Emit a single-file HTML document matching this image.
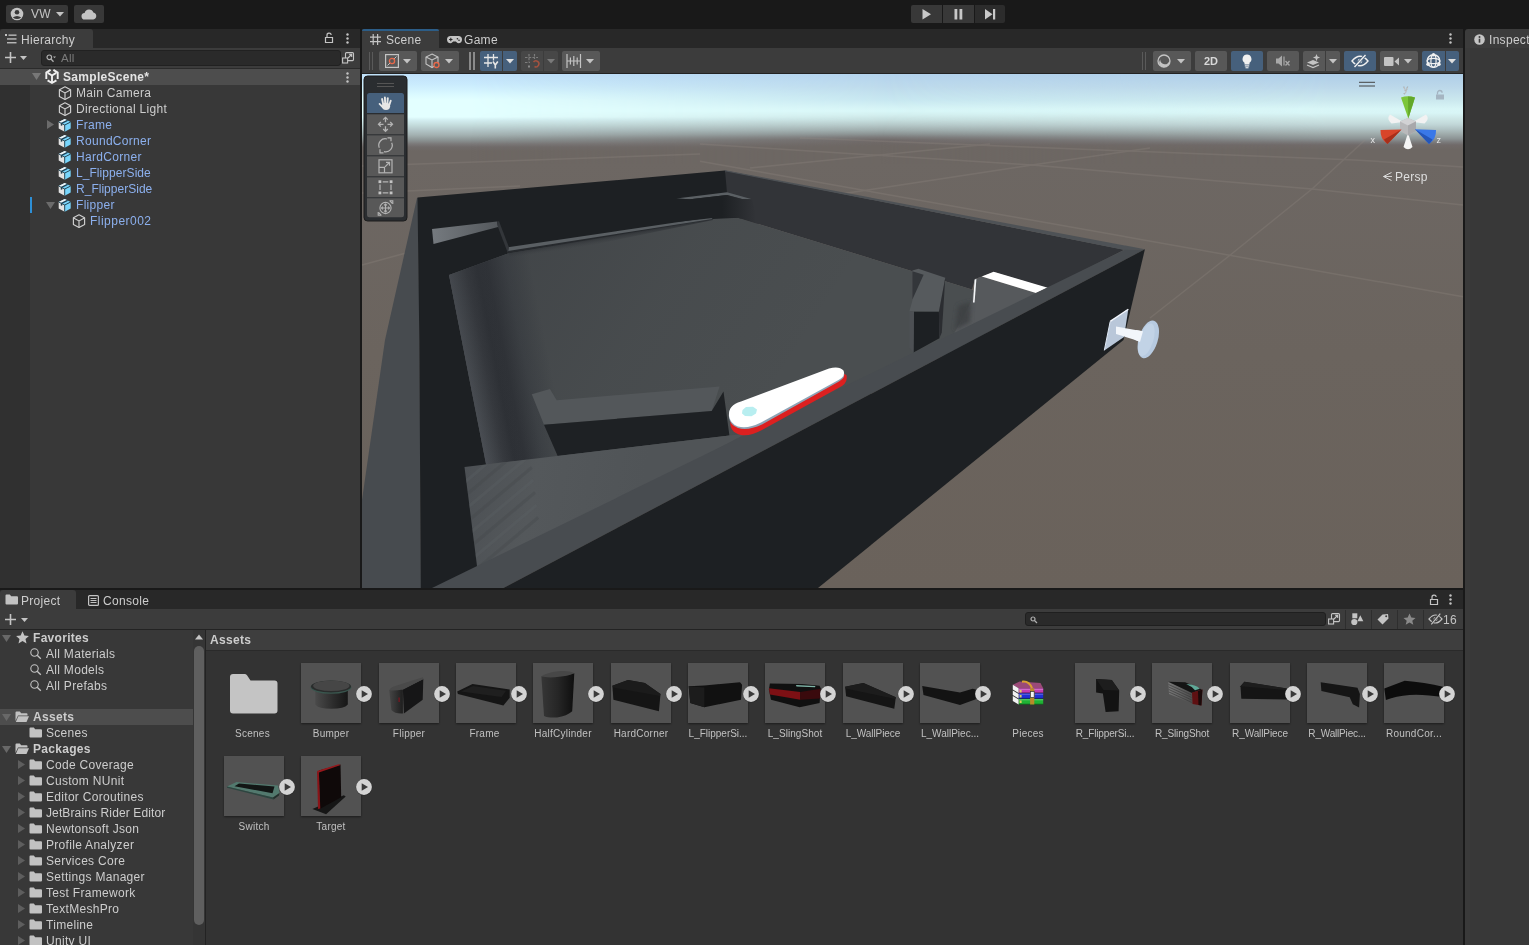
<!DOCTYPE html><html><head><meta charset="utf-8"><title>Unity</title><style>
*{box-sizing:border-box;margin:0;padding:0}
html,body{width:1529px;height:945px;overflow:hidden;background:#191919}
body{position:relative;font-family:"Liberation Sans",sans-serif;font-size:12px;letter-spacing:.3px;color:#cdcdcd;-webkit-font-smoothing:antialiased}
.abs{position:absolute}
.t{position:absolute;white-space:nowrap;line-height:16px;height:16px}
.b{font-weight:700}
.blue{color:#8cb0ee}
.btn{position:absolute;background:#585858;border-radius:2px}
.btn.on{background:#46607c}
.btn.dis{background:#474747}
svg{position:absolute;overflow:visible}
</style></head><body><div id="root" style="position:absolute;left:0;top:0;width:1529px;height:945px;will-change:transform">
<div class="abs" style="left:0px;top:0px;width:1529px;height:29px;background:#191919;"></div>
<div class="abs" style="left:6px;top:5px;width:62px;height:18px;background:#383838;border-radius:2px"></div>
<div class="abs" style="left:74px;top:5px;width:30px;height:18px;background:#383838;border-radius:2px"></div>
<svg style="left:10px;top:7px" width="14" height="14" viewBox="0 0 14 14"><circle cx="7" cy="7" r="6.3" fill="#c4c4c4"/><circle cx="7" cy="5.3" r="2.3" fill="#383838"/><path d="M2.8 10.6 Q7 7.2 11.2 10.6 Q7 13.6 2.8 10.6Z" fill="#383838"/></svg>
<div class="t " style="left:31px;top:6px;color:#c4c4c4">VW</div>
<svg style="left:56px;top:12px" width="8" height="5" viewBox="0 0 8 5"><path d="M0 0H8L4 4.5Z" fill="#c4c4c4"/></svg>
<svg style="left:81px;top:8px" width="16" height="12" viewBox="0 0 16 12"><path d="M4 11.5a3.3 3.3 0 0 1-.4-6.6A4.6 4.6 0 0 1 12.4 4.6 3.5 3.5 0 0 1 12.3 11.5Z" fill="#c4c4c4"/></svg>
<div class="abs" style="left:911px;top:5px;width:31px;height:18px;background:#383838;border-radius:2px 0 0 2px"></div>
<div class="abs" style="left:943px;top:5px;width:31px;height:18px;background:#383838;"></div>
<div class="abs" style="left:975px;top:5px;width:30px;height:18px;background:#2c2c2c;border-radius:0 2px 2px 0"></div>
<svg style="left:922px;top:9px" width="10" height="11" viewBox="0 0 10 11"><path d="M0.5 0L9 5.3L0.5 10.6Z" fill="#c8c8c8"/></svg>
<svg style="left:954px;top:9px" width="9" height="11" viewBox="0 0 9 11"><rect x="0.5" y="0" width="2.8" height="10.5" fill="#c8c8c8"/><rect x="5.5" y="0" width="2.8" height="10.5" fill="#c8c8c8"/></svg>
<svg style="left:985px;top:9px" width="11" height="11" viewBox="0 0 11 11"><path d="M0 0L7.5 5.3L0 10.6Z" fill="#c8c8c8"/><rect x="8" y="0" width="2.2" height="10.5" fill="#c8c8c8"/></svg>
<div class="abs" style="left:0px;top:29px;width:360px;height:19px;background:#282828;"></div>
<div class="abs" style="left:0px;top:29px;width:93px;height:19px;background:#3c3c3c;border-radius:3px 3px 0 0"></div>
<div class="abs" style="left:0px;top:48px;width:360px;height:540px;background:#383838;"></div>
<div class="abs" style="left:0px;top:48px;width:360px;height:20px;background:#3c3c3c;"></div>
<div class="abs" style="left:0px;top:68px;width:360px;height:1px;background:#2b2b2b;"></div>
<div class="abs" style="left:0px;top:69px;width:30px;height:519px;background:#303030;"></div>
<div class="abs" style="left:362px;top:29px;width:1101px;height:19px;background:#282828;"></div>
<div class="abs" style="left:362px;top:29px;width:77px;height:19px;background:#3c3c3c;border-radius:3px 3px 0 0"></div>
<div class="abs" style="left:362px;top:29px;width:77px;height:2px;background:#2c5d87;border-radius:3px 3px 0 0"></div>
<div class="abs" style="left:362px;top:48px;width:1101px;height:26px;background:#3c3c3c;"></div>
<div class="abs" style="left:362px;top:73px;width:1101px;height:1px;background:#232323;"></div>
<div class="abs" style="left:1465px;top:29px;width:64px;height:19px;background:#3c3c3c;border-radius:3px 0 0 0"></div>
<div class="abs" style="left:1465px;top:48px;width:64px;height:897px;background:#383838;"></div>
<div class="abs" style="left:1465px;top:48px;width:5px;height:897px;background:#3a3a3a;"></div>
<div class="abs" style="left:0px;top:588px;width:1463px;height:2px;background:#191919;"></div>
<div class="abs" style="left:0px;top:590px;width:1463px;height:19px;background:#282828;"></div>
<div class="abs" style="left:0px;top:590px;width:76px;height:19px;background:#3c3c3c;border-radius:3px 3px 0 0"></div>
<div class="abs" style="left:0px;top:609px;width:1463px;height:20px;background:#3c3c3c;"></div>
<div class="abs" style="left:0px;top:629px;width:1463px;height:1px;background:#232323;"></div>
<div class="abs" style="left:0px;top:630px;width:205px;height:315px;background:#383838;"></div>
<div class="abs" style="left:205px;top:630px;width:1px;height:315px;background:#232323;"></div>
<div class="abs" style="left:206px;top:630px;width:1257px;height:20px;background:#3e3e3e;"></div>
<div class="abs" style="left:206px;top:650px;width:1257px;height:1px;background:#2a2a2a;"></div>
<div class="abs" style="left:206px;top:651px;width:1257px;height:294px;background:#333333;"></div>
<svg style="left:5px;top:33px" width="12" height="12" viewBox="0 0 12 12"><g fill="#c4c4c4"><rect x="0" y="1" width="2" height="2"/><rect x="0" y="2" width="1" height="1" fill="none"/><rect x="3.5" y="1.5" width="8" height="1.3"/><rect x="2" y="5.3" width="9.5" height="1.3"/><rect x="2" y="9.1" width="9.5" height="1.3"/></g></svg>
<div class="t " style="left:21px;top:32px;">Hierarchy</div>
<svg style="left:324px;top:32px" width="10" height="12" viewBox="0 0 10 12"><path d="M1.5 5.5h7v5h-7z" fill="none" stroke="#c4c4c4" stroke-width="1.2"/><path d="M3 5.5V3.4a2.1 2.1 0 0 1 4.2-.4" fill="none" stroke="#c4c4c4" stroke-width="1.2"/></svg>
<svg style="left:345.5px;top:33px" width="3" height="11" viewBox="0 0 3 11"><circle cx="1.5" cy="1.5" r="1.2" fill="#c4c4c4"/><circle cx="1.5" cy="5.5" r="1.2" fill="#c4c4c4"/><circle cx="1.5" cy="9.5" r="1.2" fill="#c4c4c4"/></svg>
<svg style="left:5px;top:52px" width="11" height="11" viewBox="0 0 11 11"><path d="M5.5 0v11M0 5.5h11" stroke="#c4c4c4" stroke-width="1.6" fill="none"/></svg>
<svg style="left:20px;top:56px" width="8" height="5" viewBox="0 0 8 5"><path d="M0 0H7L3.5 4Z" fill="#c4c4c4"/></svg>
<div class="abs" style="left:41px;top:50px;width:300px;height:16px;background:#2a2a2a;border:1px solid #212121;border-radius:3px"></div>
<svg style="left:46px;top:54px" width="10" height="9" viewBox="0 0 10 9"><circle cx="3.3" cy="3.3" r="2.3" fill="none" stroke="#b0b0b0" stroke-width="1.2"/><path d="M5 5l2.5 2.8" stroke="#b0b0b0" stroke-width="1.3"/><path d="M7 2.5h3l-1.5 1.8z" fill="#b0b0b0"/></svg>
<div class="t " style="left:61px;top:50px;color:#7a7a7a;font-size:11.5px">All</div>
<svg style="left:342px;top:52px" width="12" height="12" viewBox="0 0 12 12"><rect x="3.5" y="0.6" width="8" height="8" rx="1" fill="none" stroke="#c4c4c4" stroke-width="1.1"/><rect x="0.6" y="6" width="5" height="5" fill="#3c3c3c" stroke="#c4c4c4" stroke-width="1.1"/><path d="M6 6l3.5-3.5M7 2.3h2.7V5" stroke="#c4c4c4" stroke-width="1.1" fill="none"/></svg>
<div class="abs" style="left:0px;top:69px;width:360px;height:16px;background:#4d4d4d;"></div>
<svg style="left:345.5px;top:71.5px" width="3" height="11" viewBox="0 0 3 11"><circle cx="1.5" cy="1.5" r="1.2" fill="#c4c4c4"/><circle cx="1.5" cy="5.5" r="1.2" fill="#c4c4c4"/><circle cx="1.5" cy="9.5" r="1.2" fill="#c4c4c4"/></svg>
<svg style="left:32px;top:73px" width="9" height="7" viewBox="0 0 9 7"><path d="M0 0H9L4.5 7Z" fill="#777"/></svg>
<svg style="left:45px;top:69px" width="14" height="15" viewBox="0 0 14 15"><g stroke="#f0f0f0" stroke-width="1.9" fill="none" stroke-linejoin="miter" stroke-linecap="butt"><path d="M7 6.500V13M7 6.500L2.800 3.900M7 6.500L11.200 3.900"/><path d="M5.600 .9L1.300 3.600V10"/><path d="M8.400 .9L12.700 3.600V10"/><path d="M2.600 11.400L7 14L11.400 11.400"/></g></svg>
<div class="t b" style="left:63px;top:68.5px;color:#e4e4e4">SampleScene*</div>
<svg style="left:58px;top:85.5px" width="14" height="14" viewBox="0 0 14 14"><path d="M7 0.8L12.6 3.8v6.6L7 13.4L1.4 10.4V3.8Z" fill="none" stroke="#d0d0d0" stroke-width="1.15" stroke-linejoin="round"/><path d="M1.6 4L7 6.9L12.4 4M7 6.9V13.2" fill="none" stroke="#d0d0d0" stroke-width="1.15"/></svg>
<div class="t " style="left:76px;top:84.5px;">Main Camera</div>
<svg style="left:58px;top:101.5px" width="14" height="14" viewBox="0 0 14 14"><path d="M7 0.8L12.6 3.8v6.6L7 13.4L1.4 10.4V3.8Z" fill="none" stroke="#d0d0d0" stroke-width="1.15" stroke-linejoin="round"/><path d="M1.6 4L7 6.9L12.4 4M7 6.9V13.2" fill="none" stroke="#d0d0d0" stroke-width="1.15"/></svg>
<div class="t " style="left:76px;top:100.5px;">Directional Light</div>
<svg style="left:58px;top:117.5px" width="14" height="14" viewBox="0 0 14 14"><path d="M0.700 4L6.700 7v6.700L0.700 10.600Z" fill="#e2e2e2"/><path d="M6.700 7L12.700 4v6.600L6.700 13.700Z" fill="#78d5fb"/><path d="M0.700 4L6.700 1L12.700 4L6.700 7Z" fill="#78d5fb"/><path d="M0.700 4L6.700 1L8.800 2L2.800 5.050Z" fill="#f4f4f4"/><path d="M2.800 5.050L8.800 2L10.300 2.800L4.300 5.800Z" fill="#1f3f52"/><path d="M0.700 4L6.700 7L12.700 4M6.700 7v6.700" stroke="#21404f" stroke-width=".9" fill="none"/><path d="M2.800 5.100v2.600l1.500-.3V5.900z" fill="#21404f"/></svg>
<div class="t blue" style="left:76px;top:116.5px;">Frame</div>
<svg style="left:47px;top:120.0px" width="7" height="9" viewBox="0 0 7 9"><path d="M0 0L7 4.5L0 9Z" fill="#6b6b6b"/></svg>
<svg style="left:58px;top:133.5px" width="14" height="14" viewBox="0 0 14 14"><path d="M0.700 4L6.700 7v6.700L0.700 10.600Z" fill="#e2e2e2"/><path d="M6.700 7L12.700 4v6.600L6.700 13.700Z" fill="#78d5fb"/><path d="M0.700 4L6.700 1L12.700 4L6.700 7Z" fill="#78d5fb"/><path d="M0.700 4L6.700 1L8.800 2L2.800 5.050Z" fill="#f4f4f4"/><path d="M2.800 5.050L8.800 2L10.300 2.800L4.300 5.800Z" fill="#1f3f52"/><path d="M0.700 4L6.700 7L12.700 4M6.700 7v6.700" stroke="#21404f" stroke-width=".9" fill="none"/><path d="M2.800 5.100v2.600l1.500-.3V5.900z" fill="#21404f"/></svg>
<div class="t blue" style="left:76px;top:132.5px;">RoundCorner</div>
<svg style="left:58px;top:149.5px" width="14" height="14" viewBox="0 0 14 14"><path d="M0.700 4L6.700 7v6.700L0.700 10.600Z" fill="#e2e2e2"/><path d="M6.700 7L12.700 4v6.600L6.700 13.700Z" fill="#78d5fb"/><path d="M0.700 4L6.700 1L12.700 4L6.700 7Z" fill="#78d5fb"/><path d="M0.700 4L6.700 1L8.800 2L2.800 5.050Z" fill="#f4f4f4"/><path d="M2.800 5.050L8.800 2L10.300 2.800L4.300 5.800Z" fill="#1f3f52"/><path d="M0.700 4L6.700 7L12.700 4M6.700 7v6.700" stroke="#21404f" stroke-width=".9" fill="none"/><path d="M2.800 5.100v2.600l1.500-.3V5.900z" fill="#21404f"/></svg>
<div class="t blue" style="left:76px;top:148.5px;">HardCorner</div>
<svg style="left:58px;top:165.5px" width="14" height="14" viewBox="0 0 14 14"><path d="M0.700 4L6.700 7v6.700L0.700 10.600Z" fill="#e2e2e2"/><path d="M6.700 7L12.700 4v6.600L6.700 13.700Z" fill="#78d5fb"/><path d="M0.700 4L6.700 1L12.700 4L6.700 7Z" fill="#78d5fb"/><path d="M0.700 4L6.700 1L8.800 2L2.800 5.050Z" fill="#f4f4f4"/><path d="M2.800 5.050L8.800 2L10.300 2.800L4.300 5.800Z" fill="#1f3f52"/><path d="M0.700 4L6.700 7L12.700 4M6.700 7v6.700" stroke="#21404f" stroke-width=".9" fill="none"/><path d="M2.800 5.100v2.600l1.500-.3V5.900z" fill="#21404f"/></svg>
<div class="t blue" style="left:76px;top:164.5px;letter-spacing:0.06px">L_FlipperSide</div>
<svg style="left:58px;top:181.5px" width="14" height="14" viewBox="0 0 14 14"><path d="M0.700 4L6.700 7v6.700L0.700 10.600Z" fill="#e2e2e2"/><path d="M6.700 7L12.700 4v6.600L6.700 13.700Z" fill="#78d5fb"/><path d="M0.700 4L6.700 1L12.700 4L6.700 7Z" fill="#78d5fb"/><path d="M0.700 4L6.700 1L8.800 2L2.800 5.050Z" fill="#f4f4f4"/><path d="M2.800 5.050L8.800 2L10.300 2.800L4.300 5.800Z" fill="#1f3f52"/><path d="M0.700 4L6.700 7L12.700 4M6.700 7v6.700" stroke="#21404f" stroke-width=".9" fill="none"/><path d="M2.800 5.100v2.600l1.500-.3V5.900z" fill="#21404f"/></svg>
<div class="t blue" style="left:76px;top:180.5px;letter-spacing:0.02px">R_FlipperSide</div>
<svg style="left:58px;top:197.5px" width="14" height="14" viewBox="0 0 14 14"><path d="M0.700 4L6.700 7v6.700L0.700 10.600Z" fill="#e2e2e2"/><path d="M6.700 7L12.700 4v6.600L6.700 13.700Z" fill="#78d5fb"/><path d="M0.700 4L6.700 1L12.700 4L6.700 7Z" fill="#78d5fb"/><path d="M0.700 4L6.700 1L8.800 2L2.800 5.050Z" fill="#f4f4f4"/><path d="M2.800 5.050L8.800 2L10.300 2.800L4.300 5.800Z" fill="#1f3f52"/><path d="M0.700 4L6.700 7L12.700 4M6.700 7v6.700" stroke="#21404f" stroke-width=".9" fill="none"/><path d="M2.800 5.100v2.600l1.500-.3V5.900z" fill="#21404f"/></svg>
<div class="t blue" style="left:76px;top:196.5px;">Flipper</div>
<svg style="left:46px;top:201.5px" width="9" height="7" viewBox="0 0 9 7"><path d="M0 0H9L4.5 7Z" fill="#6b6b6b"/></svg>
<svg style="left:72px;top:213.5px" width="14" height="14" viewBox="0 0 14 14"><path d="M7 0.8L12.6 3.8v6.6L7 13.4L1.4 10.4V3.8Z" fill="none" stroke="#d0d0d0" stroke-width="1.15" stroke-linejoin="round"/><path d="M1.6 4L7 6.9L12.4 4M7 6.9V13.2" fill="none" stroke="#d0d0d0" stroke-width="1.15"/></svg>
<div class="t blue" style="left:90px;top:212.5px;letter-spacing:0.48px">Flipper002</div>
<div class="abs" style="left:30px;top:197px;width:2px;height:16px;background:#2d8fd6;"></div>
<svg style="left:370px;top:34px" width="11" height="11" viewBox="0 0 11 11"><path d="M3.2 0v11M7.6 0v11M0 3.2h11M0 7.6h11" stroke="#c4c4c4" stroke-width="1.2"/></svg>
<div class="t " style="left:386px;top:32px;">Scene</div>
<svg style="left:447px;top:35px" width="15" height="10" viewBox="0 0 15 10"><path d="M3.6 1h7.8a3.6 3.6 0 0 1 0 7.2c-1.2 0-1.8-.9-2.6-1.6H6.200c-.8.7-1.400 1.6-2.600 1.600a3.600 3.600 0 0 1 0-7.200z" fill="#c4c4c4"/><path d="M3.800 2.800v3.400M2.100 4.500h3.400" stroke="#282828" stroke-width="1.100"/><circle cx="10.400" cy="3.700" r=".8" fill="#282828"/><circle cx="12" cy="5.300" r=".8" fill="#282828"/></svg>
<div class="t " style="left:464px;top:32px;">Game</div>
<svg style="left:1448.5px;top:33px" width="3" height="11" viewBox="0 0 3 11"><circle cx="1.5" cy="1.5" r="1.2" fill="#c4c4c4"/><circle cx="1.5" cy="5.5" r="1.2" fill="#c4c4c4"/><circle cx="1.5" cy="9.5" r="1.2" fill="#c4c4c4"/></svg>
<svg style="left:1473.5px;top:33.5px" width="11" height="11" viewBox="0 0 11 11"><circle cx="5.5" cy="5.5" r="5.3" fill="#c4c4c4"/><rect x="4.700" y="4.700" width="1.600" height="4" fill="#3c3c3c"/><circle cx="5.500" cy="2.900" r="1" fill="#3c3c3c"/></svg>
<div class="t " style="left:1489px;top:32px;">Inspector</div>
<div class="abs" style="left:369px;top:52px;width:1px;height:18px;background:#5a5a5a;"></div>
<div class="abs" style="left:372px;top:52px;width:1px;height:18px;background:#5a5a5a;"></div>
<div class="btn " style="left:379px;top:51px;width:38px;height:20px"></div>
<div class="btn " style="left:421px;top:51px;width:38px;height:20px"></div>
<svg style="left:385px;top:54px" width="14" height="14" viewBox="0 0 14 14"><rect x=".6" y=".6" width="12.800" height="12.800" fill="none" stroke="#c4c4c4" stroke-width="1.200"/><path d="M2.500 11.500L11.500 2.500" stroke="#c4c4c4" stroke-width="1"/><circle cx="7" cy="7" r="2.600" fill="#585858" stroke="#e8684a" stroke-width="1.300"/></svg>
<svg style="left:403px;top:59px" width="8" height="5" viewBox="0 0 8 5"><path d="M0 0H8L4 4.5Z" fill="#c4c4c4"/></svg>
<svg style="left:425px;top:53px" width="16" height="16" viewBox="0 0 16 16"><path d="M7 1L13 4v7L7 14.500L1 11V4Z" fill="none" stroke="#c4c4c4" stroke-width="1.100"/><path d="M1 4l6 3 6-3M7 7v7.500" stroke="#c4c4c4" stroke-width="1.100" fill="none"/><circle cx="11.500" cy="12" r="2.500" fill="#585858" stroke="#e8684a" stroke-width="1.300"/></svg>
<svg style="left:445px;top:59px" width="8" height="5" viewBox="0 0 8 5"><path d="M0 0H8L4 4.5Z" fill="#c4c4c4"/></svg>
<div class="abs" style="left:469px;top:52px;width:1.5px;height:18px;background:#8a8a8a;"></div>
<div class="abs" style="left:473px;top:52px;width:1.5px;height:18px;background:#8a8a8a;"></div>
<div class="btn on" style="left:480px;top:51px;width:37px;height:20px"></div>
<div class="abs" style="left:502px;top:51px;width:1px;height:20px;background:#3c3c3c;"></div>
<svg style="left:484px;top:54px" width="16" height="15" viewBox="0 0 16 15"><path d="M4 0v13M9.500 0v6.500M0 3.500h14M0 9h8" stroke="#e6e6e6" stroke-width="1.300" fill="none"/><path d="M9 7.500l2.300 3.500v3.500M13.800 7.500l-2.500 3.500" stroke="#e6e6e6" stroke-width="1.600" fill="none"/></svg>
<svg style="left:506px;top:59px" width="8" height="5" viewBox="0 0 8 5"><path d="M0 0H8L4 4.5Z" fill="#e0e0e0"/></svg>
<div class="btn dis" style="left:521px;top:51px;width:37px;height:20px"></div>
<div class="abs" style="left:543px;top:51px;width:1px;height:20px;background:#3c3c3c;"></div>
<svg style="left:525px;top:54px" width="16" height="15" viewBox="0 0 16 15"><path d="M4 0v8M9.500 0v5M0 3.500h13M0 8.500h5" stroke="#7c7c7c" stroke-width="1.200" fill="none" stroke-dasharray="2.500 1.200"/><path d="M8.500 8a3 3 0 1 1 1 4.500" stroke="#a4523f" stroke-width="1.500" fill="none"/><rect x="3" y="11.500" width="2" height="2" fill="#8a8a8a"/></svg>
<svg style="left:547px;top:59px" width="8" height="5" viewBox="0 0 8 5"><path d="M0 0H8L4 4.5Z" fill="#7a7a7a"/></svg>
<div class="btn " style="left:562px;top:51px;width:38px;height:20px"></div>
<svg style="left:566px;top:54px" width="16" height="14" viewBox="0 0 16 14"><path d="M1 0v14M14.500 0v14M1 7h13.500M4.400 3.500v7M7.800 2v10M11.200 3.500v7" stroke="#c4c4c4" stroke-width="1.200" fill="none"/></svg>
<svg style="left:586px;top:59px" width="8" height="5" viewBox="0 0 8 5"><path d="M0 0H8L4 4.5Z" fill="#c4c4c4"/></svg>
<div class="abs" style="left:1142px;top:52px;width:1px;height:18px;background:#5a5a5a;"></div>
<div class="abs" style="left:1145px;top:52px;width:1px;height:18px;background:#5a5a5a;"></div>
<div class="btn " style="left:1153px;top:51px;width:38px;height:20px"></div>
<svg style="left:1157px;top:54px" width="14" height="14" viewBox="0 0 14 14"><circle cx="7" cy="7" r="6" fill="none" stroke="#c4c4c4" stroke-width="1.300"/><path d="M2.500 10.500A5.500 5.500 0 0 0 12.400 6 4.500 4.500 0 0 1 3.200 5.500 5.500 5.500 0 0 0 2.500 10.500z" fill="#c4c4c4"/></svg>
<svg style="left:1177px;top:59px" width="8" height="5" viewBox="0 0 8 5"><path d="M0 0H8L4 4.5Z" fill="#c4c4c4"/></svg>
<div class="btn " style="left:1195px;top:51px;width:32px;height:20px"></div>
<div class="t b" style="left:1204px;top:53px;color:#d8d8d8;font-size:11px;letter-spacing:0">2D</div>
<div class="btn on" style="left:1231px;top:51px;width:32px;height:20px"></div>
<svg style="left:1241px;top:54px" width="12" height="15" viewBox="0 0 12 15"><path d="M6 .5a4.500 4.500 0 0 1 2.500 8.200V10.500h-5V8.700A4.500 4.500 0 0 1 6 .5z" fill="#f0f0f0"/><rect x="3.800" y="11.300" width="4.400" height="1.200" fill="#f0f0f0"/><rect x="4.500" y="13.200" width="3" height="1.100" fill="#f0f0f0"/></svg>
<div class="btn " style="left:1267px;top:51px;width:32px;height:20px"></div>
<svg style="left:1276px;top:55px" width="15" height="12" viewBox="0 0 15 12"><path d="M0 3.500h2.500L6 .5v11L2.500 8.500H0z" fill="#a8a8a8"/><path d="M8 1.500v9" stroke="#a8a8a8" stroke-width="1.200"/><path d="M9.500 6l4 4.500M13.500 6l-4 4.500" stroke="#a8a8a8" stroke-width="1.300"/></svg>
<div class="btn " style="left:1303px;top:51px;width:37px;height:20px"></div>
<div class="abs" style="left:1325px;top:51px;width:1px;height:20px;background:#3c3c3c;"></div>
<svg style="left:1306px;top:54px" width="16" height="15" viewBox="0 0 16 15"><path d="M1 8.500l6-2.500 6 2.500-6 2.500z" fill="#c4c4c4"/><path d="M1 11l6 2.500 6-2.500" stroke="#c4c4c4" stroke-width="1.200" fill="none"/><path d="M10.500 0l1 2.600 2.600 1-2.600 1-1 2.600-1-2.600-2.600-1 2.600-1z" fill="#c4c4c4"/></svg>
<svg style="left:1329px;top:59px" width="8" height="5" viewBox="0 0 8 5"><path d="M0 0H8L4 4.5Z" fill="#c4c4c4"/></svg>
<div class="btn on" style="left:1344px;top:51px;width:32px;height:20px"></div>
<svg style="left:1351px;top:54px" width="18" height="14" viewBox="0 0 18 14"><path d="M1 7q8-9.500 16 0q-8 9.500-16 0z" fill="none" stroke="#f0f0f0" stroke-width="1.400"/><circle cx="9" cy="7" r="2.300" fill="#f0f0f0"/><path d="M3 13.500L15 .5" stroke="#46607c" stroke-width="3"/><path d="M3.500 13L14.500 1" stroke="#f0f0f0" stroke-width="1.400"/></svg>
<div class="btn " style="left:1380px;top:51px;width:38px;height:20px"></div>
<svg style="left:1384px;top:56px" width="16" height="11" viewBox="0 0 16 11"><rect x="0" y="1" width="9.500" height="9" rx="1" fill="#c4c4c4"/><path d="M10.500 5.500L15 1.500v8z" fill="#c4c4c4"/></svg>
<svg style="left:1404px;top:59px" width="8" height="5" viewBox="0 0 8 5"><path d="M0 0H8L4 4.5Z" fill="#c4c4c4"/></svg>
<div class="btn on" style="left:1422px;top:51px;width:37px;height:20px"></div>
<div class="abs" style="left:1445px;top:51px;width:1px;height:20px;background:#3c3c3c;"></div>
<svg style="left:1425px;top:53px" width="17" height="16" viewBox="0 0 17 16"><circle cx="8.500" cy="8" r="6.300" fill="none" stroke="#f0f0f0" stroke-width="1.500"/><ellipse cx="8.500" cy="8" rx="6.300" ry="2.600" fill="none" stroke="#f0f0f0" stroke-width="1.200"/><ellipse cx="8.500" cy="8" rx="2.600" ry="6.300" fill="none" stroke="#f0f0f0" stroke-width="1.200"/><circle cx="8.500" cy="1.700" r="1.700" fill="#f0f0f0"/><circle cx="3" cy="11.300" r="1.700" fill="#f0f0f0"/><circle cx="14" cy="11.300" r="1.700" fill="#f0f0f0"/></svg>
<svg style="left:1448px;top:59px" width="8" height="5" viewBox="0 0 8 5"><path d="M0 0H8L4 4.5Z" fill="#e0e0e0"/></svg>
<svg style="left:362px;top:74px;overflow:hidden" width="1101" height="514" viewBox="362 74 1101 514">
<defs>
<linearGradient id="skyL" x1="0" y1="74" x2="0" y2="164" gradientUnits="userSpaceOnUse">
<stop offset="0.0000" stop-color="#c0e1fa"/><stop offset="0.1222" stop-color="#cbecfd"/><stop offset="0.2333" stop-color="#dbfaff"/><stop offset="0.2889" stop-color="#e3ffff"/><stop offset="0.4778" stop-color="#e3ffff"/><stop offset="0.5111" stop-color="#d4eff2"/><stop offset="0.5667" stop-color="#c4dcdc"/><stop offset="0.6222" stop-color="#b3c6c8"/><stop offset="0.6778" stop-color="#a3b1b1"/><stop offset="0.7333" stop-color="#8c9494"/><stop offset="0.7778" stop-color="#7b7979"/><stop offset="0.8111" stop-color="#706b6a"/><stop offset="0.8556" stop-color="#6d6763"/><stop offset="1.0000" stop-color="#6d6763"/>
</linearGradient>
<linearGradient id="skyC" x1="0" y1="74" x2="0" y2="164" gradientUnits="userSpaceOnUse">
<stop offset="0.0000" stop-color="#b4d3ed"/><stop offset="0.1444" stop-color="#bedbec"/><stop offset="0.2889" stop-color="#c8e8f1"/><stop offset="0.3778" stop-color="#d6f4f6"/><stop offset="0.4111" stop-color="#d9f7f8"/><stop offset="0.4556" stop-color="#d3efef"/><stop offset="0.5111" stop-color="#c6dfdf"/><stop offset="0.5667" stop-color="#b5c8c8"/><stop offset="0.6222" stop-color="#a0aeae"/><stop offset="0.6667" stop-color="#8c9494"/><stop offset="0.7000" stop-color="#7c7b7b"/><stop offset="0.7333" stop-color="#706a69"/><stop offset="0.8000" stop-color="#6d6763"/><stop offset="1.0000" stop-color="#6d6763"/>
</linearGradient>
<linearGradient id="skyR" x1="0" y1="74" x2="0" y2="164" gradientUnits="userSpaceOnUse">
<stop offset="0.0000" stop-color="#afcee8"/><stop offset="0.1444" stop-color="#bcd8ea"/><stop offset="0.2889" stop-color="#cbe8ee"/><stop offset="0.3889" stop-color="#d9f6f7"/><stop offset="0.4333" stop-color="#d8f5f6"/><stop offset="0.4889" stop-color="#cfe8e8"/><stop offset="0.5556" stop-color="#c2d8d9"/><stop offset="0.6111" stop-color="#b1c3c4"/><stop offset="0.6667" stop-color="#9fabab"/><stop offset="0.7222" stop-color="#8b9293"/><stop offset="0.7556" stop-color="#7b7b7c"/><stop offset="0.7889" stop-color="#706a69"/><stop offset="0.8444" stop-color="#6d6763"/><stop offset="1.0000" stop-color="#6d6763"/>
</linearGradient>
<linearGradient id="gnd" x1="0" y1="160" x2="0" y2="588" gradientUnits="userSpaceOnUse"><stop offset="0" stop-color="#6d6763"/><stop offset="0.45" stop-color="#6b645e"/><stop offset="1" stop-color="#6a625b"/></linearGradient>
<linearGradient id="hC" x1="470" y1="0" x2="880" y2="0" gradientUnits="userSpaceOnUse"><stop offset="0" stop-color="#000"/><stop offset="1" stop-color="#fff"/></linearGradient>
<linearGradient id="hR" x1="880" y1="0" x2="1330" y2="0" gradientUnits="userSpaceOnUse"><stop offset="0" stop-color="#000"/><stop offset="1" stop-color="#fff"/></linearGradient>
<mask id="mC" maskUnits="userSpaceOnUse" x="362" y="74" width="1101" height="92"><rect x="362" y="74" width="1101" height="92" fill="url(#hC)"/></mask>
<mask id="mR" maskUnits="userSpaceOnUse" x="362" y="74" width="1101" height="92"><rect x="362" y="74" width="1101" height="92" fill="url(#hR)"/></mask>
<linearGradient id="fl" x1="449" y1="275" x2="529.500" y2="259.200" gradientUnits="userSpaceOnUse">
<stop offset="0" stop-color="#50545a"/>
<stop offset="0.08" stop-color="#474b50"/>
<stop offset="0.22" stop-color="#373a3f"/>
<stop offset="0.35" stop-color="#2d3035"/>
<stop offset="0.48" stop-color="#2f3237"/>
<stop offset="0.7" stop-color="#3e4246"/>
<stop offset="1" stop-color="#4a4e50"/>
</linearGradient>
<linearGradient id="fsh" x1="480" y1="240" x2="760" y2="420" gradientUnits="userSpaceOnUse">
<stop offset="0" stop-color="#303338" stop-opacity=".36"/><stop offset=".55" stop-color="#303338" stop-opacity=".1"/><stop offset="1" stop-color="#303338" stop-opacity="0"/>
</linearGradient>
<linearGradient id="lsh" x1="610" y1="234" x2="611.300" y2="242.500" gradientUnits="userSpaceOnUse">
<stop offset="0" stop-color="#25282c" stop-opacity=".95"/><stop offset="1" stop-color="#3a3d41" stop-opacity="0"/>
</linearGradient>
<linearGradient id="rw" x1="722" y1="0" x2="756" y2="0" gradientUnits="userSpaceOnUse">
<stop offset="0" stop-color="#1d2023"/><stop offset="1" stop-color="#323438"/>
</linearGradient>
<linearGradient id="rc" x1="432" y1="0" x2="498" y2="0" gradientUnits="userSpaceOnUse">
<stop offset="0" stop-color="#757a7f"/><stop offset="1" stop-color="#54585c"/>
</linearGradient>
<linearGradient id="ramp" x1="464" y1="467" x2="640" y2="500" gradientUnits="userSpaceOnUse">
<stop offset="0" stop-color="#4c5054"/><stop offset="0.4" stop-color="#54585b"/><stop offset="1" stop-color="#505457"/>
</linearGradient>
<clipPath id="rcp"><polygon points="464.500,467 729.400,435.500 745,434 600,512 478,570 477,566"/></clipPath>
<filter id="bl" x="-50%" y="-50%" width="200%" height="200%"><feGaussianBlur stdDeviation="2.200"/></filter>
</defs>
<rect x="362" y="160" width="1101" height="428" fill="url(#gnd)"/>
<rect x="362" y="74" width="1101" height="90" fill="url(#skyL)"/>
<rect x="362" y="74" width="1101" height="90" fill="url(#skyC)" mask="url(#mC)"/>
<rect x="362" y="74" width="1101" height="90" fill="url(#skyR)" mask="url(#mR)"/>
<g stroke="#948b84" stroke-width="1.500" opacity=".27" fill="none"><path d="M362 265L417 250"/><path d="M362 193L520 186"/><path d="M362 166L700 154"/><path d="M700 161.200L1463 296.700"/><path d="M700 144L1032 165L1312 189L1463 205"/><path d="M800 138L1355 160L1463 167"/><path d="M1365 140L1312 189L1229 256L1150 318"/><path d="M1150 148L1032 165L871 189.400L800 200"/><path d="M990 144L750 168"/></g>
<polygon points="417,198 385,340 362,500 362,588 421,588 419.500,340 418,198" fill="#474b4f"/>
<polygon points="417.500,197.500 725,170.600 742,222 508,258 452,280 489,464 466,470 479,566 435,588 420.800,588 419.300,340" fill="#1d2023"/>
<polygon points="725,170.600 1124.500,249.700 1048,288.500 994,272 975,279 972,289.400 738,217.700 727,193" fill="#323438"/>
<polygon points="725,170.200 1144.900,249.200 1124.500,249.900 1000,225.100 725,171.200" fill="#4e5256"/>
<polygon points="449,275 508,253.500 713,219 738,217.700 972,289.400 985,300 1000,320 500,588 486,464" fill="#4a4e50"/>
<polygon points="449,275 508,253.500 548,247 592,454 486,464" fill="url(#fl)"/>
<polygon points="449,275 508,253.500 713,219 738,217.700 972,289.400 985,300 1000,320 500,588 486,464" fill="url(#fsh)"/>
<polygon points="508,250 712,218.500 713,220 510,262" fill="url(#lsh)"/>
<polygon points="508,247.300 711,217.200 712.500,219 508,251" fill="#5a5f63"/>
<polygon points="432,229 497,221.600 498,227 433.500,244" fill="url(#rc)"/>
<polygon points="497,221.600 499,221.200 509,247.500 508,253.500 498,227" fill="#33363a"/>
<polygon points="676,198.400 727,192.300 752,199.200 742,199 727,195 690,199.200" fill="#5b6064"/>
<polygon points="676,198.400 690,199.200 727,195 742,199 752,199.200 758,224 738,217.700 713,218 676,222" fill="url(#rw)"/>
<polygon points="975,279 982,276.500 1036,293 1047.800,287.700 1060,290 940,360 972,300" fill="#56595c"/>
<polygon points="958,306 971,302 970,322 955,330" fill="#3c3f43" filter="url(#bl)" opacity=".85"/>
<polygon points="912.400,270.600 918.300,268.800 945.300,277.700 938.900,311.800 909.400,311.200 912.400,300.600" fill="#565a5d"/>
<polygon points="912.400,271.200 923.600,274.700 912.400,299.400" fill="#33363a"/>
<polygon points="914,311.800 938.900,311.800 939.400,338.300 913.500,352.400" fill="#1d2023"/>
<polygon points="945.300,277.700 938.900,311.800 939.400,338.300 941.800,332.400" fill="#2b2d31"/>
<polygon points="909.400,311.200 914,311.800 913.500,352.400 909.400,347.700" fill="#4d5054"/>
<polygon points="981.800,276.500 993.600,271.800 1047.800,287.700 1036,293" fill="#ffffff"/>
<polygon points="974.600,279.400 976.400,279 974.600,302.400 973,302.400" fill="#f4f6f8"/>
<polygon points="531.800,394.300 549.900,389 556.700,400.200 719.600,386.500 711.700,411 544,424.700" fill="#53575a"/>
<polygon points="544,424.700 711.700,411 723.500,391.400 729.400,435.500 557.700,456" fill="#1e2124"/>
<polygon points="464.500,467 729.400,435.500 745,434 600,512 478,570 477,566" fill="url(#ramp)"/>
<g stroke-width="3" fill="none" opacity=".33" clip-path="url(#rcp)"><path d="M465.0,482.0L527.0,430.0" stroke="#5d6165"/><path d="M466.6,494.5L528.6,442.5" stroke="#44484b"/><path d="M468.2,507.0L530.2,455.0" stroke="#5d6165"/><path d="M469.8,519.5L531.8,467.5" stroke="#44484b"/><path d="M471.4,532.0L533.4,480.0" stroke="#5d6165"/><path d="M473.0,544.5L535.0,492.5" stroke="#44484b"/><path d="M474.6,557.0L536.6,505.0" stroke="#5d6165"/><path d="M476.2,569.5L538.2,517.5" stroke="#44484b"/></g>
<polygon points="1144.900,249.200 1124.500,249.700 432,588 503.500,588" fill="#484c50"/>
<polygon points="1144.900,249.200 1123.500,340 818,588 503.500,588" fill="#1d2023"/>
<path d="M730.500,421 Q729,432 741,435 Q750,436.500 762,430 L842,386 Q848,382 846.500,375 L840,372 L740,405 Z" fill="#dc2020"/>
<path d="M729,417.500 Q727.500,406 741,402.500 L829,369.500 Q839,366.500 843.500,371.500 Q846.500,377 839,381.500 L762,424.500 Q748,431 738,428 Q730,425 729,417.500 Z" fill="#8ea4b6"/>
<path d="M729,416 Q728,405 741,401.500 L829,368.500 Q839,365.500 843.500,370.500 Q846,376 838.500,380 L761,422.500 Q748,429 738,426.500 Q730,423.500 729,416 Z" fill="#ffffff"/>
<polygon points="742.500,410 746,407 753,406.800 757,409.500 756,413.500 751.500,416.300 745,416 742,413.500" fill="#b8eef0"/>
<polygon points="1110.200,321.400 1128.300,309.200 1124,337.100 1104.300,350.400" fill="#b9c7d9"/>
<path d="M1110.200,321.400 L1128.300,309.200" stroke="#f4f8ff" stroke-width="1.300"/>
<path d="M1110.200,321.400 L1104.300,350.400" stroke="#dfe8f4" stroke-width="1"/>
<polygon points="1116,326.500 1141,331 1138.500,341 1116,334" fill="#f2f6fb"/>
<ellipse cx="1148.300" cy="339.300" rx="9.500" ry="19.500" transform="rotate(17 1148.300 339.300)" fill="#b7cae0"/>
<ellipse cx="1146.300" cy="339.800" rx="7" ry="17" transform="rotate(17 1146.300 339.800)" fill="#c9d8ea" opacity=".6"/>
<polygon points="1136,330 1143,331.300 1140,342 1134.500,339.700" fill="#f2f6fb"/>
<rect x="364" y="76" width="43" height="145" rx="3.500" fill="#2a2d30" stroke="#1c1c1c" stroke-width="1"/>
<path d="M377,83.500h17M377,86.500h17" stroke="#555" stroke-width="1"/>
<path d="M367,113V95.5a2.500,2.500 0 0 1 2.500,-2.500h32a2.500,2.500 0 0 1 2.500,2.500V113z" fill="#46607c"/>
<rect x="367" y="114.3" width="37" height="20" fill="#585858"/>
<rect x="367" y="135.3" width="37" height="20" fill="#585858"/>
<rect x="367" y="156.3" width="37" height="20" fill="#585858"/>
<rect x="367" y="177.3" width="37" height="20" fill="#585858"/>
<path d="M367,198.3h37V214.8a2.500,2.500 0 0 1 -2.500,2.500h-32a2.500,2.500 0 0 1 -2.500,-2.500z" fill="#585858"/>
<g transform="translate(385.500,103.300)"><ellipse cx=".5" cy="3" rx="4.100" ry="3.600" fill="#e6e6e6"/><g stroke="#e6e6e6" stroke-width="1.900" stroke-linecap="round" fill="none"><path d="M-2.300,1L-3.400,-4.300"/><path d="M-.3,.5L-.6,-5.800"/><path d="M1.800,.8L2.300,-5"/><path d="M3.700,2L5.200,-2.600"/><path d="M-2.800,3.800L-5.900,.6"/></g></g>
<g transform="translate(385.500,124.300)" stroke="#b4b4b4" stroke-width="1.300" fill="none"><path d="M0,-6.500V-2M0,6.500V2M-6.500,0H-2M6.500,0H2"/><path d="M-2.300,-4.700L0,-7L2.300,-4.700M-2.300,4.700L0,7L2.300,4.700M-4.700,-2.300L-7,0L-4.700,2.300M4.700,-2.300L7,0L4.700,2.300"/></g>
<g transform="translate(385.500,145.300)" stroke="#b4b4b4" stroke-width="1.200" fill="none"><path d="M-6.200,2.500A6.500,6.500 0 0 1 1.500,-6.300"/><path d="M6.200,-2.500A6.500,6.500 0 0 1 -1.500,6.300"/><path d="M2,-7.500L5.500,-7.500L5.500,-4M-2,7.500L-5.500,7.500L-5.500,4" /></g>
<g transform="translate(385.500,166.300)" stroke="#b4b4b4" stroke-width="1.200" fill="none"><rect x="-6.500" y="-6.500" width="13" height="13"/><path d="M-6.500,1H-1V6.500"/><path d="M-.5,.5L3.800,-3.800M.5,-4H4V-.5"/></g>
<g transform="translate(385.500,187.300)" stroke="#b4b4b4" stroke-width="1.200" fill="none"><path d="M-5.500,-2.800V2.800M5.500,-2.800V2.800M-2.800,-5.500H2.800M-2.800,5.500H2.800"/><g fill="#c4c4c4" stroke="none"><rect x="-7" y="-7" width="2.800" height="2.800"/><rect x="4.200" y="-7" width="2.800" height="2.800"/><rect x="-7" y="4.200" width="2.800" height="2.800"/><rect x="4.200" y="4.200" width="2.800" height="2.800"/></g></g>
<g transform="translate(385.500,208)" stroke="#b4b4b4" stroke-width="1.100" fill="none"><circle r="5.600"/><path d="M0,-3.800V3.800M-3.800,0H3.800"/><path d="M-1.400,-2.600L0,-4L1.400,-2.600M-1.400,2.600L0,4L1.400,2.600M-2.600,-1.400L-4,0L-2.600,1.400M2.600,-1.400L4,0L2.600,1.400" /><path d="M4,-7.300L7.300,-7.300L7.300,-4M-4,7.300L-7.300,7.300L-7.300,4" /><path d="M4.500,-7L7,-4.500z M-4.500,7L-7,4.500z" fill="#b4b4b4"/></g>
<path d="M1359,82.300h16M1359,86h16" stroke="#444" stroke-width="1"/>
<path d="M1403,122 L1390,114.500 Q1386,119 1391.500,123.500 Z" fill="#f2f2f2"/>
<path d="M1413,122 L1426,114.500 Q1430,119 1424.500,123.500 Z" fill="#f2f2f2"/>
<path d="M1408,133 L1403.500,147 Q1408,151.500 1412.500,147 Z" fill="#f4f4f4"/>
<polygon points="1408,118 1416,121.500 1416,131 1408,135.500 1400,131 1400,121.500" fill="#b9b9bb"/>
<polygon points="1408,118 1416,121.500 1408,125.500 1400,121.500" fill="#d2d2d4"/>
<polygon points="1408,125.500 1416,121.500 1416,131 1408,135.500" fill="#a8a8ab"/>
<path d="M1401,97.500 Q1408,95 1415,97.500 L1408.300,118.500 Z" fill="#7cc63a"/><path d="M1408,96.500 Q1412,96.500 1415,97.500 L1408.300,118.500 Z" fill="#63a82a"/>
<path d="M1401.500,129.500 L1380.500,130 Q1380,139 1387.500,144 Z" fill="#d8452a"/><path d="M1401.500,129.500 L1384,139.500 Q1385.500,142.500 1387.500,144 Z" fill="#a82f1a"/>
<path d="M1415,129.300 L1436,130 Q1436.500,139 1429,144 Z" fill="#3a78e8"/><path d="M1415,129.300 L1432.500,139.500 Q1431,142.500 1429,144 Z" fill="#2556b8"/>
<text x="1403.500" y="91.500" font-size="9" font-family="Liberation Sans,sans-serif" fill="#f0f0f0" stroke="#888" stroke-width=".3">y</text>
<text x="1370.500" y="143" font-size="9" font-family="Liberation Sans,sans-serif" fill="#e8e8e8">x</text>
<text x="1436.500" y="143" font-size="9" font-family="Liberation Sans,sans-serif" fill="#e8e8e8">z</text>
<g transform="translate(1436,90)" opacity=".75"><rect x="0" y="4.500" width="8" height="5" fill="#9aa6b4"/><path d="M1.500,4.500V2.800a2.300,2.300 0 0 1 4.600,0" fill="none" stroke="#9aa6b4" stroke-width="1.300"/></g>
<path d="M1391.500,172.500L1383.500,176.500L1391.500,180.500" stroke="#dcdcdc" stroke-width="1" fill="none"/><path d="M1383.500,176.500H1392" stroke="#dcdcdc" stroke-width=".9"/>
<text x="1395" y="181" font-size="12" letter-spacing=".3" font-family="Liberation Sans,sans-serif" fill="#dedede">Persp</text>
</svg>
<svg style="left:5px;top:594px" width="13" height="11" viewBox="0 0 13 11"><path d="M0.500 1.500a1 1 0 0 1 1-1h3.300l1.400 1.700h5.800a1 1 0 0 1 1 1v6.300a1 1 0 0 1-1 1h-10.500a1 1 0 0 1-1-1z" fill="#c2c2c2"/></svg>
<div class="t " style="left:21px;top:593px;">Project</div>
<svg style="left:88px;top:594.5px" width="11" height="11" viewBox="0 0 11 11"><rect x=".6" y=".6" width="9.800" height="9.800" rx="1" fill="none" stroke="#c4c4c4" stroke-width="1.200"/><path d="M2.500 3.500h6M2.500 5.500h6M2.500 7.500h6" stroke="#c4c4c4" stroke-width="1"/></svg>
<div class="t " style="left:103px;top:593px;">Console</div>
<svg style="left:1428.5px;top:593.5px" width="10" height="12" viewBox="0 0 10 12"><path d="M1.500 5.500h7v5h-7z" fill="none" stroke="#c4c4c4" stroke-width="1.200"/><path d="M3 5.500V3.400a2.100 2.100 0 0 1 4.200-.4" fill="none" stroke="#c4c4c4" stroke-width="1.200"/></svg>
<svg style="left:1448.5px;top:594px" width="3" height="11" viewBox="0 0 3 11"><circle cx="1.500" cy="1.500" r="1.200" fill="#c4c4c4"/><circle cx="1.500" cy="5.500" r="1.200" fill="#c4c4c4"/><circle cx="1.500" cy="9.500" r="1.200" fill="#c4c4c4"/></svg>
<svg style="left:5px;top:613.5px" width="11" height="11" viewBox="0 0 11 11"><path d="M5.500 0v11M0 5.500h11" stroke="#c4c4c4" stroke-width="1.600" fill="none"/></svg>
<svg style="left:21px;top:617.5px" width="8" height="5" viewBox="0 0 8 5"><path d="M0 0H7L3.500 4Z" fill="#c4c4c4"/></svg>
<div class="abs" style="left:1025px;top:612px;width:301px;height:14px;background:#2a2a2a;border:1px solid #1f1f1f;border-radius:3px"></div>
<svg style="left:1030px;top:616px" width="8" height="8" viewBox="0 0 8 8"><circle cx="3" cy="3" r="2" fill="none" stroke="#b0b0b0" stroke-width="1.200"/><path d="M4.500 4.500l2.500 2.500" stroke="#b0b0b0" stroke-width="1.300"/></svg>
<svg style="left:1328px;top:613px" width="12" height="12" viewBox="0 0 12 12"><rect x="3.500" y=".6" width="8" height="8" rx="1" fill="none" stroke="#c4c4c4" stroke-width="1.100"/><rect x=".6" y="6" width="5" height="5" fill="#3c3c3c" stroke="#c4c4c4" stroke-width="1.100"/><path d="M6 6l3.500-3.500M7 2.300h2.700V5" stroke="#c4c4c4" stroke-width="1.100" fill="none"/></svg>
<div class="abs" style="left:1345px;top:610px;width:1px;height:19px;background:#2e2e2e;"></div>
<div class="abs" style="left:1371px;top:610px;width:1px;height:19px;background:#2e2e2e;"></div>
<div class="abs" style="left:1397px;top:610px;width:1px;height:19px;background:#2e2e2e;"></div>
<div class="abs" style="left:1423px;top:610px;width:1px;height:19px;background:#2e2e2e;"></div>
<svg style="left:1351px;top:613px" width="13" height="12" viewBox="0 0 13 12"><rect x="1.300" y=".3" width="5" height="5" fill="#c4c4c4"/><circle cx="3.300" cy="9" r="3.100" fill="#c4c4c4"/><path d="M6.300 8.300l3-6 3 6z" fill="#c4c4c4"/></svg>
<svg style="left:1377px;top:613px" width="13" height="12" viewBox="0 0 13 12"><path d="M5.500 1.500l5.500-.5.500 4.500-6 6-5-5z" fill="#c4c4c4"/><circle cx="9.200" cy="3.300" r="1" fill="#3c3c3c"/></svg>
<svg style="left:1403px;top:613px" width="13" height="12" viewBox="0 0 13 12"><path d="M6.500 .5l1.800 4 4.200.4-3.200 2.800 1 4.100-3.800-2.300-3.800 2.300 1-4.100L.5 4.900l4.200-.4z" fill="#8a8a8a"/></svg>
<svg style="left:1428px;top:613px" width="16" height="12" viewBox="0 0 16 12"><path d="M1 6q6.500-8 13 0q-6.500 8-13 0z" fill="none" stroke="#c4c4c4" stroke-width="1.200"/><circle cx="7.500" cy="6" r="2" fill="#c4c4c4"/><path d="M3 11.500L12 .5" stroke="#3c3c3c" stroke-width="2.600"/><path d="M3.300 11.300L12.300 .7" stroke="#c4c4c4" stroke-width="1.200"/></svg>
<div class="t " style="left:1443px;top:611.5px;color:#c4c4c4">16</div>
<svg style="left:2px;top:634.6px" width="9" height="7" viewBox="0 0 9 7"><path d="M0 0H9L4.500 7Z" fill="#686868"/></svg>
<svg style="left:15.5px;top:631.1px" width="13" height="13" viewBox="0 0 13 13"><path d="M6.500 .3l1.900 4.200 4.500.5-3.400 3 1 4.500-4-2.400-4 2.400 1-4.500L.1 5l4.500-.5z" fill="#c4c4c4"/></svg>
<div class="t b" style="left:33px;top:629.6px;">Favorites</div>
<svg style="left:30px;top:647.6px" width="12" height="12" viewBox="0 0 12 12"><circle cx="4.500" cy="4.500" r="3.700" fill="none" stroke="#c4c4c4" stroke-width="1.100"/><path d="M7.200 7.200l3.600 3.600" stroke="#c4c4c4" stroke-width="1.300"/></svg>
<div class="t " style="left:46px;top:645.6px;">All Materials</div>
<svg style="left:30px;top:663.6px" width="12" height="12" viewBox="0 0 12 12"><circle cx="4.500" cy="4.500" r="3.700" fill="none" stroke="#c4c4c4" stroke-width="1.100"/><path d="M7.200 7.200l3.600 3.600" stroke="#c4c4c4" stroke-width="1.300"/></svg>
<div class="t " style="left:46px;top:661.6px;">All Models</div>
<svg style="left:30px;top:679.6px" width="12" height="12" viewBox="0 0 12 12"><circle cx="4.500" cy="4.500" r="3.700" fill="none" stroke="#c4c4c4" stroke-width="1.100"/><path d="M7.200 7.200l3.600 3.600" stroke="#c4c4c4" stroke-width="1.300"/></svg>
<div class="t " style="left:46px;top:677.6px;">All Prefabs</div>
<div class="abs" style="left:0px;top:709px;width:193px;height:16px;background:#4d4d4d;"></div>
<svg style="left:2px;top:713.8000000000001px" width="9" height="7" viewBox="0 0 9 7"><path d="M0 0H9L4.500 7Z" fill="#686868"/></svg>
<svg style="left:15px;top:711.3000000000001px" width="15" height="12" viewBox="0 0 15 12"><path d="M0.500 1.500a1 1 0 0 1 1-1h3.300l1.400 1.700h5.300a1 1 0 0 1 1 1v1.300h-9.500l-2.500 5.500z" fill="#c2c2c2"/><path d="M3.300 5.300h10.700l-2.500 5.700h-10.700z" fill="#c2c2c2"/></svg>
<div class="t b" style="left:33px;top:708.8000000000001px;">Assets</div>
<svg style="left:29px;top:727.3000000000001px" width="13" height="11" viewBox="0 0 13 11"><path d="M0.500 1.500a1 1 0 0 1 1-1h3.300l1.400 1.700h5.800a1 1 0 0 1 1 1v6.300a1 1 0 0 1-1 1h-10.500a1 1 0 0 1-1-1z" fill="#c2c2c2"/></svg>
<div class="t " style="left:46px;top:724.8000000000001px;">Scenes</div>
<svg style="left:2px;top:745.8000000000001px" width="9" height="7" viewBox="0 0 9 7"><path d="M0 0H9L4.500 7Z" fill="#686868"/></svg>
<svg style="left:15px;top:743.3000000000001px" width="15" height="12" viewBox="0 0 15 12"><path d="M0.500 1.500a1 1 0 0 1 1-1h3.300l1.400 1.700h5.300a1 1 0 0 1 1 1v1.300h-9.500l-2.500 5.500z" fill="#c2c2c2"/><path d="M3.300 5.300h10.700l-2.500 5.700h-10.700z" fill="#c2c2c2"/></svg>
<div class="t b" style="left:33px;top:740.8000000000001px;">Packages</div>
<svg style="left:18px;top:760.3000000000001px" width="7" height="9" viewBox="0 0 7 9"><path d="M0 0L7 4.500L0 9Z" fill="#5e5e5e"/></svg>
<svg style="left:29px;top:759.3000000000001px" width="13" height="11" viewBox="0 0 13 11"><path d="M0.500 1.500a1 1 0 0 1 1-1h3.300l1.400 1.700h5.800a1 1 0 0 1 1 1v6.300a1 1 0 0 1-1 1h-10.500a1 1 0 0 1-1-1z" fill="#c2c2c2"/></svg>
<div class="t " style="left:46px;top:756.8000000000001px;">Code Coverage</div>
<svg style="left:18px;top:776.3000000000001px" width="7" height="9" viewBox="0 0 7 9"><path d="M0 0L7 4.500L0 9Z" fill="#5e5e5e"/></svg>
<svg style="left:29px;top:775.3000000000001px" width="13" height="11" viewBox="0 0 13 11"><path d="M0.500 1.500a1 1 0 0 1 1-1h3.300l1.400 1.700h5.800a1 1 0 0 1 1 1v6.300a1 1 0 0 1-1 1h-10.500a1 1 0 0 1-1-1z" fill="#c2c2c2"/></svg>
<div class="t " style="left:46px;top:772.8000000000001px;">Custom NUnit</div>
<svg style="left:18px;top:792.3000000000001px" width="7" height="9" viewBox="0 0 7 9"><path d="M0 0L7 4.500L0 9Z" fill="#5e5e5e"/></svg>
<svg style="left:29px;top:791.3000000000001px" width="13" height="11" viewBox="0 0 13 11"><path d="M0.500 1.500a1 1 0 0 1 1-1h3.300l1.400 1.700h5.800a1 1 0 0 1 1 1v6.300a1 1 0 0 1-1 1h-10.500a1 1 0 0 1-1-1z" fill="#c2c2c2"/></svg>
<div class="t " style="left:46px;top:788.8000000000001px;">Editor Coroutines</div>
<svg style="left:18px;top:808.3000000000001px" width="7" height="9" viewBox="0 0 7 9"><path d="M0 0L7 4.500L0 9Z" fill="#5e5e5e"/></svg>
<svg style="left:29px;top:807.3000000000001px" width="13" height="11" viewBox="0 0 13 11"><path d="M0.500 1.500a1 1 0 0 1 1-1h3.300l1.400 1.700h5.800a1 1 0 0 1 1 1v6.300a1 1 0 0 1-1 1h-10.500a1 1 0 0 1-1-1z" fill="#c2c2c2"/></svg>
<div class="t " style="left:46px;top:804.8000000000001px;letter-spacing:.12px">JetBrains Rider Editor</div>
<svg style="left:18px;top:824.3000000000001px" width="7" height="9" viewBox="0 0 7 9"><path d="M0 0L7 4.500L0 9Z" fill="#5e5e5e"/></svg>
<svg style="left:29px;top:823.3000000000001px" width="13" height="11" viewBox="0 0 13 11"><path d="M0.500 1.500a1 1 0 0 1 1-1h3.300l1.400 1.700h5.800a1 1 0 0 1 1 1v6.300a1 1 0 0 1-1 1h-10.500a1 1 0 0 1-1-1z" fill="#c2c2c2"/></svg>
<div class="t " style="left:46px;top:820.8000000000001px;">Newtonsoft Json</div>
<svg style="left:18px;top:840.3000000000001px" width="7" height="9" viewBox="0 0 7 9"><path d="M0 0L7 4.500L0 9Z" fill="#5e5e5e"/></svg>
<svg style="left:29px;top:839.3000000000001px" width="13" height="11" viewBox="0 0 13 11"><path d="M0.500 1.500a1 1 0 0 1 1-1h3.300l1.400 1.700h5.800a1 1 0 0 1 1 1v6.300a1 1 0 0 1-1 1h-10.500a1 1 0 0 1-1-1z" fill="#c2c2c2"/></svg>
<div class="t " style="left:46px;top:836.8000000000001px;">Profile Analyzer</div>
<svg style="left:18px;top:856.3000000000001px" width="7" height="9" viewBox="0 0 7 9"><path d="M0 0L7 4.500L0 9Z" fill="#5e5e5e"/></svg>
<svg style="left:29px;top:855.3000000000001px" width="13" height="11" viewBox="0 0 13 11"><path d="M0.500 1.500a1 1 0 0 1 1-1h3.300l1.400 1.700h5.800a1 1 0 0 1 1 1v6.300a1 1 0 0 1-1 1h-10.500a1 1 0 0 1-1-1z" fill="#c2c2c2"/></svg>
<div class="t " style="left:46px;top:852.8000000000001px;">Services Core</div>
<svg style="left:18px;top:872.3000000000001px" width="7" height="9" viewBox="0 0 7 9"><path d="M0 0L7 4.500L0 9Z" fill="#5e5e5e"/></svg>
<svg style="left:29px;top:871.3000000000001px" width="13" height="11" viewBox="0 0 13 11"><path d="M0.500 1.500a1 1 0 0 1 1-1h3.300l1.400 1.700h5.800a1 1 0 0 1 1 1v6.300a1 1 0 0 1-1 1h-10.500a1 1 0 0 1-1-1z" fill="#c2c2c2"/></svg>
<div class="t " style="left:46px;top:868.8000000000001px;">Settings Manager</div>
<svg style="left:18px;top:888.3000000000001px" width="7" height="9" viewBox="0 0 7 9"><path d="M0 0L7 4.500L0 9Z" fill="#5e5e5e"/></svg>
<svg style="left:29px;top:887.3000000000001px" width="13" height="11" viewBox="0 0 13 11"><path d="M0.500 1.500a1 1 0 0 1 1-1h3.300l1.400 1.700h5.800a1 1 0 0 1 1 1v6.300a1 1 0 0 1-1 1h-10.500a1 1 0 0 1-1-1z" fill="#c2c2c2"/></svg>
<div class="t " style="left:46px;top:884.8000000000001px;">Test Framework</div>
<svg style="left:18px;top:904.3000000000001px" width="7" height="9" viewBox="0 0 7 9"><path d="M0 0L7 4.500L0 9Z" fill="#5e5e5e"/></svg>
<svg style="left:29px;top:903.3000000000001px" width="13" height="11" viewBox="0 0 13 11"><path d="M0.500 1.500a1 1 0 0 1 1-1h3.300l1.400 1.700h5.800a1 1 0 0 1 1 1v6.300a1 1 0 0 1-1 1h-10.500a1 1 0 0 1-1-1z" fill="#c2c2c2"/></svg>
<div class="t " style="left:46px;top:900.8000000000001px;">TextMeshPro</div>
<svg style="left:18px;top:920.3000000000001px" width="7" height="9" viewBox="0 0 7 9"><path d="M0 0L7 4.500L0 9Z" fill="#5e5e5e"/></svg>
<svg style="left:29px;top:919.3000000000001px" width="13" height="11" viewBox="0 0 13 11"><path d="M0.500 1.500a1 1 0 0 1 1-1h3.300l1.400 1.700h5.800a1 1 0 0 1 1 1v6.300a1 1 0 0 1-1 1h-10.500a1 1 0 0 1-1-1z" fill="#c2c2c2"/></svg>
<div class="t " style="left:46px;top:916.8000000000001px;">Timeline</div>
<svg style="left:18px;top:936.3000000000001px" width="7" height="9" viewBox="0 0 7 9"><path d="M0 0L7 4.500L0 9Z" fill="#5e5e5e"/></svg>
<svg style="left:29px;top:935.3000000000001px" width="13" height="11" viewBox="0 0 13 11"><path d="M0.500 1.500a1 1 0 0 1 1-1h3.300l1.400 1.700h5.800a1 1 0 0 1 1 1v6.300a1 1 0 0 1-1 1h-10.500a1 1 0 0 1-1-1z" fill="#c2c2c2"/></svg>
<div class="t " style="left:46px;top:932.8000000000001px;">Unity UI</div>
<div class="abs" style="left:193px;top:630px;width:12px;height:315px;background:#353535;"></div>
<svg style="left:195px;top:634px" width="8" height="6" viewBox="0 0 8 6"><path d="M0 5.500L4 0.500L8 5.500Z" fill="#c4c4c4"/></svg>
<div class="abs" style="left:194px;top:646px;width:10px;height:279px;background:#5f5f5f;border-radius:5px"></div>
<div class="t b" style="left:210px;top:631.5px;">Assets</div>
<svg width="0" height="0" style="left:0;top:0"><defs><linearGradient id="gb" x1="0" y1="0" x2="1" y2="0"><stop offset="0" stop-color="#4a4a4a"/><stop offset=".55" stop-color="#2c2c2c"/><stop offset="1" stop-color="#161616"/></linearGradient><linearGradient id="gh" x1="0" y1="0" x2="1" y2="0"><stop offset="0" stop-color="#363636"/><stop offset=".5" stop-color="#262626"/><stop offset="1" stop-color="#0e0e0e"/></linearGradient><linearGradient id="gf" x1="0" y1="0" x2="1" y2="0"><stop offset="0" stop-color="#454545"/><stop offset="1" stop-color="#1e1e1e"/></linearGradient><linearGradient id="gs" x1="0" y1="0" x2="1" y2="0"><stop offset="0" stop-color="#787878"/><stop offset="1" stop-color="#4c4c4c"/></linearGradient></defs></svg>
<svg style="left:224px;top:663px" width="60" height="60" viewBox="0 0 60 60"><path d="M6 14a3 3 0 0 1 3-3h11.500a3 3 0 0 1 2.500 1.300l3.500 5.200h24a3 3 0 0 1 3 3v27a3 3 0 0 1-3 3h-41.500a3 3 0 0 1-3-3z" fill="#c4c4c4"/></svg>
<div class="t" style="left:207.5px;width:90px;text-align:center;top:725.5px;font-size:10px;letter-spacing:0.25px;color:#c0c0c0">Scenes</div>
<div class="abs" style="left:301px;top:663px;width:60px;height:60px;background:#525252;box-shadow:0 1px 2px rgba(0,0,0,.45)"></div>
<svg style="left:301px;top:663px" width="60" height="60" viewBox="0 0 60 60"><path d="M14.300 27v14.500q3 4.300 16 4.300t16.500-4.300v-14.500z" fill="url(#gb)"/><ellipse cx="30" cy="24.300" rx="20.400" ry="6.500" fill="#39564e"/><ellipse cx="30" cy="23.400" rx="20" ry="6" fill="#2a2c2c"/><ellipse cx="30.300" cy="22.800" rx="18.200" ry="5.200" fill="#464646"/></svg>
<svg style="left:355.5px;top:685.5px" width="16" height="16" viewBox="0 0 16 16"><circle cx="8" cy="8.300" r="8.300" fill="#000" opacity=".25"/><circle cx="8" cy="8" r="7.900" fill="#d4d4d4"/><path d="M5.700 4.300L12 8L5.700 11.700Z" fill="#3a3a3a"/></svg>
<div class="t" style="left:286px;width:90px;text-align:center;top:725.5px;font-size:10px;letter-spacing:0.25px;color:#c0c0c0">Bumper</div>
<div class="abs" style="left:379px;top:663px;width:60px;height:60px;background:#525252;box-shadow:0 1px 2px rgba(0,0,0,.45)"></div>
<svg style="left:379px;top:663px" width="60" height="60" viewBox="0 0 60 60"><path d="M10.300 27.500q1-2.500 4-3l9.600 2v24q-8 .5-11.500-3.500z" fill="url(#gf)"/><path d="M23.900 26.400L44.300 15.900L43.700 36.800L24.900 50.400z" fill="#161617"/><path d="M10.300 27.300q1.500-3 6-4.300L43.700 14.300l.9 1.800L23.900 26.500q-8 1.600-13.600.8z" fill="#4a4a4a"/><rect x="19.300" y="34.500" width="1.600" height="4.500" fill="#6a1a22"/></svg>
<svg style="left:433.5px;top:685.5px" width="16" height="16" viewBox="0 0 16 16"><circle cx="8" cy="8.300" r="8.300" fill="#000" opacity=".25"/><circle cx="8" cy="8" r="7.900" fill="#d4d4d4"/><path d="M5.700 4.300L12 8L5.700 11.700Z" fill="#3a3a3a"/></svg>
<div class="t" style="left:364px;width:90px;text-align:center;top:725.5px;font-size:10px;letter-spacing:0.25px;color:#c0c0c0">Flipper</div>
<div class="abs" style="left:456px;top:663px;width:60px;height:60px;background:#525252;box-shadow:0 1px 2px rgba(0,0,0,.45)"></div>
<svg style="left:456px;top:663px" width="60" height="60" viewBox="0 0 60 60"><path d="M1.200 28.500L16.500 21.100L53.700 26.400V34.700L47.400 42.600L1.900 31.100z" fill="#151515"/><path d="M5 28.600L17 23L50 27.800L45.500 34z" fill="#1f1f1f"/></svg>
<svg style="left:510.5px;top:685.5px" width="16" height="16" viewBox="0 0 16 16"><circle cx="8" cy="8.300" r="8.300" fill="#000" opacity=".25"/><circle cx="8" cy="8" r="7.900" fill="#d4d4d4"/><path d="M5.700 4.300L12 8L5.700 11.700Z" fill="#3a3a3a"/></svg>
<div class="t" style="left:439.5px;width:90px;text-align:center;top:725.5px;font-size:10px;letter-spacing:0.25px;color:#c0c0c0">Frame</div>
<div class="abs" style="left:533px;top:663px;width:60px;height:60px;background:#525252;box-shadow:0 1px 2px rgba(0,0,0,.45)"></div>
<svg style="left:533px;top:663px" width="60" height="60" viewBox="0 0 60 60"><path d="M8.400 13.300L41.300 10.200L39.200 48.300Q34 53 24 54.500Q15 55 11 53z" fill="url(#gh)"/><path d="M8.400 13.300Q14 9.500 27.700 8.100Q37 7.800 41.300 10.200Q36 13 22 14.300Q12 14.800 8.400 13.300z" fill="#474747"/></svg>
<svg style="left:587.5px;top:685.5px" width="16" height="16" viewBox="0 0 16 16"><circle cx="8" cy="8.300" r="8.300" fill="#000" opacity=".25"/><circle cx="8" cy="8" r="7.900" fill="#d4d4d4"/><path d="M5.700 4.300L12 8L5.700 11.700Z" fill="#3a3a3a"/></svg>
<div class="t" style="left:518px;width:90px;text-align:center;top:725.5px;font-size:10px;letter-spacing:0.25px;color:#c0c0c0">HalfCylinder</div>
<div class="abs" style="left:611px;top:663px;width:60px;height:60px;background:#525252;box-shadow:0 1px 2px rgba(0,0,0,.45)"></div>
<svg style="left:611px;top:663px" width="60" height="60" viewBox="0 0 60 60"><path d="M1.400 22.700L17 17L33.800 20.100L49.500 31.100L47.900 48.300L2.400 36.800z" fill="#151515"/><path d="M1.400 22.700L17 17L33.800 20.100L49.500 31.100L48.800 33L2 24.500z" fill="#1b1b1b"/></svg>
<svg style="left:665.5px;top:685.5px" width="16" height="16" viewBox="0 0 16 16"><circle cx="8" cy="8.300" r="8.300" fill="#000" opacity=".25"/><circle cx="8" cy="8" r="7.900" fill="#d4d4d4"/><path d="M5.700 4.300L12 8L5.700 11.700Z" fill="#3a3a3a"/></svg>
<div class="t" style="left:596px;width:90px;text-align:center;top:725.5px;font-size:10px;letter-spacing:0.25px;color:#c0c0c0">HardCorner</div>
<div class="abs" style="left:688px;top:663px;width:60px;height:60px;background:#525252;box-shadow:0 1px 2px rgba(0,0,0,.45)"></div>
<svg style="left:688px;top:663px" width="60" height="60" viewBox="0 0 60 60"><path d="M.7 23.200L16.400 22.400L52 19.300L54.100 21.700L53 36.800L16.400 44.200L2.300 40z" fill="#111"/><path d="M.7 23.200L16.400 24.500V44.200L2.300 40z" fill="#1c1c1c"/></svg>
<svg style="left:742.5px;top:685.5px" width="16" height="16" viewBox="0 0 16 16"><circle cx="8" cy="8.300" r="8.300" fill="#000" opacity=".25"/><circle cx="8" cy="8" r="7.900" fill="#d4d4d4"/><path d="M5.700 4.300L12 8L5.700 11.700Z" fill="#3a3a3a"/></svg>
<div class="t" style="left:673px;width:90px;text-align:center;top:725.5px;font-size:10px;letter-spacing:-0.01px;color:#c0c0c0">L_FlipperSi...</div>
<div class="abs" style="left:765px;top:663px;width:60px;height:60px;background:#525252;box-shadow:0 1px 2px rgba(0,0,0,.45)"></div>
<svg style="left:765px;top:663px" width="60" height="60" viewBox="0 0 60 60"><path d="M4.900 20.600L36.800 21.100L54.600 22.700L55.700 25.300L54.600 40L34.700 44.200L6 36.800L3.900 26.400z" fill="#101010"/><path d="M3.900 25.300L35.300 29V36.800L4.900 31.600z" fill="#7d1014"/><path d="M35.300 29L55.500 25.800L55 35.500L35.300 36.800z" fill="#3a0a0d"/><path d="M31 22L50.400 22.900L50 24.300L31.500 23.400z" fill="#7fb5a8"/></svg>
<svg style="left:819.5px;top:685.5px" width="16" height="16" viewBox="0 0 16 16"><circle cx="8" cy="8.300" r="8.300" fill="#000" opacity=".25"/><circle cx="8" cy="8" r="7.900" fill="#d4d4d4"/><path d="M5.700 4.300L12 8L5.700 11.700Z" fill="#3a3a3a"/></svg>
<div class="t" style="left:750px;width:90px;text-align:center;top:725.5px;font-size:10px;letter-spacing:0.07px;color:#c0c0c0">L_SlingShot</div>
<div class="abs" style="left:843px;top:663px;width:60px;height:60px;background:#525252;box-shadow:0 1px 2px rgba(0,0,0,.45)"></div>
<svg style="left:843px;top:663px" width="60" height="60" viewBox="0 0 60 60"><path d="M2.100 23.800L20.400 20.100L52.800 34.200L51.300 45.700L3.100 33.200z" fill="#151515"/><path d="M2.100 23.800L20.400 20.100L52.800 34.200L52.500 36L2.500 25.500z" fill="#1c1c1c"/></svg>
<svg style="left:897.5px;top:685.5px" width="16" height="16" viewBox="0 0 16 16"><circle cx="8" cy="8.300" r="8.300" fill="#000" opacity=".25"/><circle cx="8" cy="8" r="7.900" fill="#d4d4d4"/><path d="M5.700 4.300L12 8L5.700 11.700Z" fill="#3a3a3a"/></svg>
<div class="t" style="left:828px;width:90px;text-align:center;top:725.5px;font-size:10px;letter-spacing:-0.05px;color:#c0c0c0">L_WallPiece</div>
<div class="abs" style="left:920px;top:663px;width:60px;height:60px;background:#525252;box-shadow:0 1px 2px rgba(0,0,0,.45)"></div>
<svg style="left:920px;top:663px" width="60" height="60" viewBox="0 0 60 60"><path d="M2.200 23L40 29.500L52.600 25.800L55.800 26.400V36.300L40 42L3.500 32.100z" fill="#131313"/></svg>
<svg style="left:974.5px;top:685.5px" width="16" height="16" viewBox="0 0 16 16"><circle cx="8" cy="8.300" r="8.300" fill="#000" opacity=".25"/><circle cx="8" cy="8" r="7.900" fill="#d4d4d4"/><path d="M5.700 4.300L12 8L5.700 11.700Z" fill="#3a3a3a"/></svg>
<div class="t" style="left:905px;width:90px;text-align:center;top:725.5px;font-size:10px;letter-spacing:0px;color:#c0c0c0">L_WallPiec...</div>
<svg style="left:998px;top:663px" width="60" height="60" viewBox="0 0 60 60"><path d="M14.800 21.700L21.600 18.500L42.500 20.100L45.200 25.300H20.600z" fill="#9a4a78"/><rect x="20.600" y="25.300" width="24.600" height="4.900" fill="#c23cb4"/><rect x="20.600" y="30.200" width="24.600" height="5.600" fill="#1f2fd6"/><rect x="20.600" y="35.800" width="24.600" height="5.700" fill="#1fb334"/><path d="M20.600 26.300h24.600M20.600 31.200h24.600M20.600 36.800h24.600" stroke="#fff" stroke-opacity=".35" stroke-width=".9"/><path d="M20.600 29.800h24.600M20.600 35.400h24.600M20.600 41.200h24.600" stroke="#000" stroke-opacity=".45" stroke-width=".9"/><path d="M14.800 21.700L20.600 25.300V30L14.800 26.400zM14.800 27.500L20.600 31V35.500L14.800 32zM14.800 33L20.600 36.500V41.500L14.800 38z" fill="#f2f2f2"/><path d="M32.100 25.300h4.200v16.200h-4.200z" fill="#b98a2a"/><path d="M24 18.700q7-1 10 6.500" stroke="#d9a030" stroke-width="2" fill="none"/><rect x="32.400" y="28.500" width="3.800" height="6" fill="#f4f4f4" stroke="#333" stroke-width=".7"/><rect x="21.600" y="27" width="2" height="2.500" fill="#e0d060"/><rect x="21.600" y="32" width="2" height="2.500" fill="#e0d060"/><rect x="21.600" y="37.500" width="2" height="2.500" fill="#e0d060"/></svg>
<div class="t" style="left:983px;width:90px;text-align:center;top:725.5px;font-size:10px;letter-spacing:0.25px;color:#c0c0c0">Pieces</div>
<div class="abs" style="left:1075px;top:663px;width:60px;height:60px;background:#525252;box-shadow:0 1px 2px rgba(0,0,0,.45)"></div>
<svg style="left:1075px;top:663px" width="60" height="60" viewBox="0 0 60 60"><path d="M21.100 15.900L36.800 17L44.200 27.400L43.600 48.300L30.600 48.900L27.900 30.600L21.100 29.500z" fill="#131313"/><path d="M21.100 15.900L36.800 17L44.200 27.400L28.500 27z" fill="#1d1d1d"/></svg>
<svg style="left:1129.5px;top:685.5px" width="16" height="16" viewBox="0 0 16 16"><circle cx="8" cy="8.300" r="8.300" fill="#000" opacity=".25"/><circle cx="8" cy="8" r="7.900" fill="#d4d4d4"/><path d="M5.700 4.300L12 8L5.700 11.700Z" fill="#3a3a3a"/></svg>
<div class="t" style="left:1060px;width:90px;text-align:center;top:725.5px;font-size:10px;letter-spacing:-0.14px;color:#c0c0c0">R_FlipperSi...</div>
<div class="abs" style="left:1152px;top:663px;width:60px;height:60px;background:#525252;box-shadow:0 1px 2px rgba(0,0,0,.45)"></div>
<svg style="left:1152px;top:663px" width="60" height="60" viewBox="0 0 60 60"><path d="M16.400 19L39.500 29.500L40 40.500L17 31.100z" fill="url(#gs)"/><path d="M16.600 21.500L39.600 32M16.700 24L39.700 34.500M16.800 26.500L39.800 37M16.900 29L39.900 39.500" stroke="#3c3c3c" stroke-width=".7"/><path d="M16.400 18.800L33.200 19.300L49.900 26.400L40 30z" fill="#141414"/><path d="M34.200 21.100Q44 21.500 47.800 25.800L43 27.300Q40 23.500 34.200 21.100z" fill="#5fa898"/><path d="M40 29.500L50.400 26.400L49.400 42.600L40.500 41z" fill="#5e1012"/><path d="M46 28L50.400 26.400L49.400 42.600L46.500 42z" fill="#1a0a0a"/></svg>
<svg style="left:1206.5px;top:685.5px" width="16" height="16" viewBox="0 0 16 16"><circle cx="8" cy="8.300" r="8.300" fill="#000" opacity=".25"/><circle cx="8" cy="8" r="7.900" fill="#d4d4d4"/><path d="M5.700 4.300L12 8L5.700 11.700Z" fill="#3a3a3a"/></svg>
<div class="t" style="left:1137px;width:90px;text-align:center;top:725.5px;font-size:10px;letter-spacing:-0.13px;color:#c0c0c0">R_SlingShot</div>
<div class="abs" style="left:1230px;top:663px;width:60px;height:60px;background:#525252;box-shadow:0 1px 2px rgba(0,0,0,.45)"></div>
<svg style="left:1230px;top:663px" width="60" height="60" viewBox="0 0 60 60"><path d="M10.500 23.200L14.400 18.800L56.800 25.600V36.600L11.300 35.800z" fill="#151515"/><path d="M10.500 23.200L14.400 18.800L56.800 25.600L56 27z" fill="#1d1d1d"/></svg>
<svg style="left:1284.5px;top:685.5px" width="16" height="16" viewBox="0 0 16 16"><circle cx="8" cy="8.300" r="8.300" fill="#000" opacity=".25"/><circle cx="8" cy="8" r="7.900" fill="#d4d4d4"/><path d="M5.700 4.300L12 8L5.700 11.700Z" fill="#3a3a3a"/></svg>
<div class="t" style="left:1215px;width:90px;text-align:center;top:725.5px;font-size:10px;letter-spacing:-0.09px;color:#c0c0c0">R_WallPiece</div>
<div class="abs" style="left:1307px;top:663px;width:60px;height:60px;background:#525252;box-shadow:0 1px 2px rgba(0,0,0,.45)"></div>
<svg style="left:1307px;top:663px" width="60" height="60" viewBox="0 0 60 60"><path d="M13.700 19.300L50.500 24.800L52.900 31.100L52.100 44.400L45.800 41.300L42.700 34.200L14.400 27.900z" fill="#151515"/></svg>
<svg style="left:1361.5px;top:685.5px" width="16" height="16" viewBox="0 0 16 16"><circle cx="8" cy="8.300" r="8.300" fill="#000" opacity=".25"/><circle cx="8" cy="8" r="7.900" fill="#d4d4d4"/><path d="M5.700 4.300L12 8L5.700 11.700Z" fill="#3a3a3a"/></svg>
<div class="t" style="left:1292px;width:90px;text-align:center;top:725.5px;font-size:10px;letter-spacing:-0.18px;color:#c0c0c0">R_WallPiec...</div>
<div class="abs" style="left:1384px;top:663px;width:60px;height:60px;background:#525252;box-shadow:0 1px 2px rgba(0,0,0,.45)"></div>
<svg style="left:1384px;top:663px" width="60" height="60" viewBox="0 0 60 60"><path d="M.3 25.600L20.700 17.700Q40 19 60 24V34.200Q40 31 25.400 31.900Q12 33 1.900 37z" fill="#0c0c0c"/></svg>
<svg style="left:1438.5px;top:685.5px" width="16" height="16" viewBox="0 0 16 16"><circle cx="8" cy="8.300" r="8.300" fill="#000" opacity=".25"/><circle cx="8" cy="8" r="7.900" fill="#d4d4d4"/><path d="M5.700 4.300L12 8L5.700 11.700Z" fill="#3a3a3a"/></svg>
<div class="t" style="left:1369px;width:90px;text-align:center;top:725.5px;font-size:10px;letter-spacing:0.25px;color:#c0c0c0">RoundCor...</div>
<div class="abs" style="left:224px;top:756px;width:60px;height:60px;background:#525252;box-shadow:0 1px 2px rgba(0,0,0,.45)"></div>
<svg style="left:224px;top:756px" width="60" height="60" viewBox="0 0 60 60"><path d="M2.900 30.500L12.500 26L54 29.500L55.500 37L49 41.500z" fill="#52796e"/><path d="M10.500 30.300L15 27.600L50.500 30.600L48.500 37.200z" fill="#121615"/><path d="M49 41.500L55.500 37L55 39.500L49.500 43.500z" fill="#22302c"/><path d="M2.900 30.500L49 41.500L49.500 43.500L3 31.800z" fill="#2c4640"/></svg>
<svg style="left:278.5px;top:778.5px" width="16" height="16" viewBox="0 0 16 16"><circle cx="8" cy="8.300" r="8.300" fill="#000" opacity=".25"/><circle cx="8" cy="8" r="7.900" fill="#d4d4d4"/><path d="M5.700 4.300L12 8L5.700 11.700Z" fill="#3a3a3a"/></svg>
<div class="t" style="left:209px;width:90px;text-align:center;top:818.8px;font-size:10px;letter-spacing:0.25px;color:#c0c0c0">Switch</div>
<div class="abs" style="left:301px;top:756px;width:60px;height:60px;background:#525252;box-shadow:0 1px 2px rgba(0,0,0,.45)"></div>
<svg style="left:301px;top:756px" width="60" height="60" viewBox="0 0 60 60"><path d="M11.400 53L42.800 39.200L44.700 40.500L25.100 58.200z" fill="#161616"/><path d="M17.900 14.400L39.500 8.500L40.200 41.200L18.600 53z" fill="#0f0909"/><path d="M16 15L37.500 8.200L39.800 8.900L17.900 16.400z" fill="#96181c"/><path d="M16 15L17.900 16.400L19.300 52.500L17 53z" fill="#8a1418"/></svg>
<svg style="left:355.5px;top:778.5px" width="16" height="16" viewBox="0 0 16 16"><circle cx="8" cy="8.300" r="8.300" fill="#000" opacity=".25"/><circle cx="8" cy="8" r="7.900" fill="#d4d4d4"/><path d="M5.700 4.300L12 8L5.700 11.700Z" fill="#3a3a3a"/></svg>
<div class="t" style="left:286px;width:90px;text-align:center;top:818.8px;font-size:10px;letter-spacing:0.25px;color:#c0c0c0">Target</div>
</div></body></html>
